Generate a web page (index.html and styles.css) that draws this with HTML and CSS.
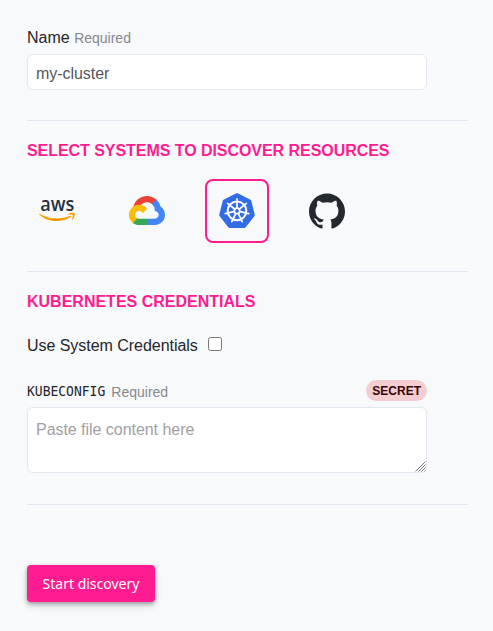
FILE: index.html
```html
<!DOCTYPE html>
<html lang="en">
<head>
<meta charset="utf-8">
<title>Discovery</title>
<link rel="stylesheet" href="styles.css">
</head>
<body>
<form class="form">
  <section class="section name-section">
    <label class="label" for="name">Name <span class="required">Required</span></label>
    <input class="input" id="name" type="text" value="my-cluster">
  </section>

  <section class="section systems-section">
    <h2 class="title">SELECT SYSTEMS TO DISCOVER RESOURCES</h2>
    <div class="systems">
      <div class="system">
        <svg width="36" height="40" viewBox="0 -8 36 40">
          <text class="aws-text" x="1.2" y="12" textLength="34" lengthAdjust="spacingAndGlyphs">aws</text>
          <g fill="#f90" transform="translate(0 -4.300)">
            <path d="M.3 19.700c-.3-.5.2-.8.7-.5 9.300 5.300 20.300 6 30.300 1.800.9-.3 1.400.5.7 1.100C23.500 28.100 9 28.300.3 19.700z"/>
            <path d="M29.300 19.100c2-1.400 5.700-1.300 6.300-.6.600.8-.3 5-2.200 6.600-.4.300-.7.100-.6-.3.600-1.500 1.300-3.900.9-4.500-.5-.6-2.800-.5-4.200-.4-.5 0-.6-.4-.2-.8z"/>
          </g>
        </svg>
      </div>
      <div class="system google">
        <svg width="36" height="29" viewBox="0 0 256 206">
          <path fill="#ea4335" d="M170.252 56.819l22.253-22.253 1.483-9.370C153.437-11.677 88.976-7.496 52.420 33.920 42.267 45.423 34.734 59.764 30.717 74.573l7.970-1.123 44.505-7.340 3.436-3.513c19.797-21.742 53.270-24.667 76.128-6.168z"/>
          <path fill="#4285f4" d="M224.205 73.918a100.249 100.249 0 0 0-30.217-48.722l-31.232 31.232a55.515 55.515 0 0 1 20.379 44.037v5.544c15.350 0 27.797 12.445 27.797 27.796 0 15.352-12.446 27.485-27.797 27.485h-55.671l-5.466 5.934v33.340l5.466 5.231h55.670c39.930.311 72.553-31.494 72.864-71.424a72.303 72.303 0 0 0-31.793-60.453"/>
          <path fill="#34a853" d="M71.870 205.796h55.593V161.290H71.870a27.275 27.275 0 0 1-11.400-2.498l-7.887 2.420-22.409 22.253-1.952 7.574c12.567 9.489 27.900 14.825 43.648 14.757"/>
          <path fill="#fbbc05" d="M71.870 61.425C31.940 61.664-.237 94.228.001 134.158a72.301 72.301 0 0 0 28.222 56.880l32.248-32.246c-13.990-6.322-20.208-22.786-13.887-36.776 6.320-13.990 22.786-20.208 36.775-13.888a27.796 27.796 0 0 1 13.887 13.888l32.248-32.248A72.224 72.224 0 0 0 71.870 61.425"/>
        </svg>
      </div>
      <div class="system selected">
        <svg width="36" height="36" viewBox="0 0 36 36">
          <path fill="#326ce5" stroke="#326ce5" stroke-width="3" stroke-linejoin="round" d="M18 1.700L30.800 8 34.300 22 25.500 33.400h-15L1.700 22 5.200 8z"/>
          <g fill="none" stroke="#fff" transform="translate(18 17.900)">
            <circle r="9.300" stroke-width="2"/>
            <circle r="2.700" stroke-width="1.800"/>
            <g stroke-width="1.700" stroke-linecap="round">
              <path d="M0-3.500V-12"/>
              <path d="M0-3.500V-12" transform="rotate(51.430)"/>
              <path d="M0-3.500V-12" transform="rotate(102.860)"/>
              <path d="M0-3.500V-12" transform="rotate(154.290)"/>
              <path d="M0-3.500V-12" transform="rotate(205.710)"/>
              <path d="M0-3.500V-12" transform="rotate(257.140)"/>
              <path d="M0-3.500V-12" transform="rotate(308.570)"/>
            </g>
          </g>
        </svg>
      </div>
      <div class="system">
        <svg width="36" height="36" viewBox="0 0 24 24">
          <path fill="#24292f" d="M12 .297c-6.630 0-12 5.373-12 12 0 5.303 3.438 9.800 8.205 11.385.6.113.82-.258.82-.577 0-.285-.01-1.040-.015-2.040-3.338.724-4.042-1.610-4.042-1.610C4.422 18.070 3.633 17.700 3.633 17.700c-1.087-.744.084-.729.084-.729 1.205.084 1.838 1.236 1.838 1.236 1.070 1.835 2.809 1.305 3.495.998.108-.776.417-1.305.76-1.605-2.665-.3-5.466-1.332-5.466-5.930 0-1.310.465-2.380 1.235-3.220-.135-.303-.54-1.523.105-3.176 0 0 1.005-.322 3.300 1.230.96-.267 1.980-.399 3-.405 1.020.006 2.040.138 3 .405 2.280-1.552 3.285-1.230 3.285-1.230.645 1.653.24 2.873.12 3.176.765.84 1.230 1.910 1.230 3.220 0 4.610-2.805 5.625-5.475 5.920.42.36.81 1.096.81 2.220 0 1.606-.015 2.896-.015 3.286 0 .315.21.69.825.57C20.565 22.092 24 17.592 24 12.297c0-6.627-5.373-12-12-12"/>
        </svg>
      </div>
    </div>
  </section>

  <section class="section credentials-section">
    <h2 class="title title-short">KUBERNETES CREDENTIALS</h2>
    <label class="check-row"><span class="check-text">Use System Credentials</span><input class="checkbox" type="checkbox"></label>
    <div class="config-head">
      <label for="config"><code class="code">KUBECONFIG</code><span class="required">Required</span></label>
      <span class="badge">SECRET</span>
    </div>
    <div class="textarea-wrap">
      <textarea class="input textarea" id="config" placeholder="Paste file content here"></textarea>
      <svg class="grip" width="11" height="11" viewBox="0 0 11 11">
        <path d="M.5 10.500l10-10M3.500 10.500l7-7M6.500 10.500l4-4M9.500 10.500l1-1"/>
      </svg>
    </div>
  </section>

  <button class="button" type="button">Start discovery</button>
</form>
</body>
</html>
```
FILE: styles.css
```css
* { box-sizing: border-box; }

body {
  margin: 0;
  min-height: 631px;
  background: #f8f9fb;
  color: #24262a;
  font: 16px/24px "Liberation Sans", Arial, sans-serif;
}

.form { width: 441px; margin-left: 27px; padding: 26px 0 20px; }
.section { border-bottom: 1px solid #e2e6f0; }
.name-section { height: 95px; }
.systems-section { height: 151px; padding-top: 18px; }
.credentials-section { height: 233px; padding-top: 18px; }
.label { display: block; height: 28px; }
.required { color: #85888d; font-size: 14px; }

.input {
  display: block;
  width: 400px;
  height: 36px;
  margin: 0;
  padding: 3px 8px 0;
  border: 1px solid #e4e7ef;
  border-radius: 6px;
  background: #fff;
  color: #55575b;
  font: inherit;
  letter-spacing: -.04px;
}

.title {
  margin: 0;
  color: #ff1c90;
  font-size: 16px;
  line-height: 24px;
  letter-spacing: -.05px;
}
.title-short { letter-spacing: 0; }

.systems { display: flex; gap: 26px; margin: 16px 0 0 -2px; }
.system {
  display: flex;
  align-items: center;
  justify-content: center;
  width: 64px;
  height: 64px;
  border: 2px solid transparent;
  border-radius: 8px;
}
.system svg { display: block; overflow: visible; }
.google { padding-bottom: 1px; }
.selected { border-color: #ff1c90; }
.aws-text {
  fill: #252f3e;
  font: 600 20px "Open Sans", sans-serif;
}

.check-row {
  display: flex;
  align-items: center;
  gap: 10px;
  height: 24px;
  margin-top: 20px;
}
.check-text { letter-spacing: -.04px; }
.checkbox { width: 14px; height: 14px; margin: 0 0 4px; }

.config-head {
  display: flex;
  justify-content: space-between;
  width: 400px;
  height: 27px;
  margin-top: 22px;
}
.code {
  display: inline-block;
  transform: translateY(-1px) scaleX(.928);
  transform-origin: left;
  font: 14px/16px "DejaVu Sans Mono", monospace;
}
.badge {
  height: 21px;
  padding: 1px 6px 0;
  border-radius: 11px;
  background: #f3cdcf;
  color: #350507;
  font-size: 12px;
  font-weight: bold;
  line-height: 21px;
}

.textarea-wrap { position: relative; width: 400px; }
.textarea { height: 66px; padding: 10px 8px; resize: none; }
.textarea::placeholder { color: #a0a1a3; }
.grip {
  position: absolute;
  right: 1px;
  bottom: 1px;
  fill: none;
  stroke: #77797c;
  stroke-width: 1;
}

.button {
  display: block;
  width: 128px;
  height: 37px;
  margin: 60px 0 0;
  padding: 0;
  border: 0;
  border-radius: 4px;
  background: #ff1c90;
  box-shadow: 0 2px 4px rgba(0, 0, 0, .3), 0 4px 8px rgba(0, 0, 0, .12);
  color: #fff;
  font: 14px "Noto Sans", sans-serif;
}
```
